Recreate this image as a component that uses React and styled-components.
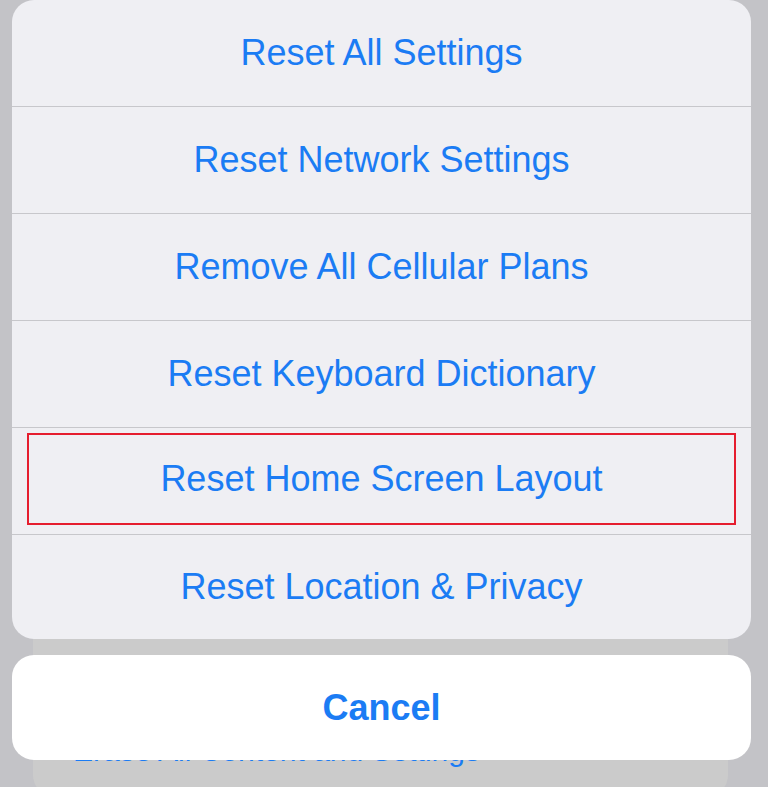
import styled, { createGlobalStyle } from "styled-components";

const GlobalStyle = createGlobalStyle`
  html, body {
    margin: 0;
    padding: 0;
    background: #c3c3c7;
  }
  body {
    font-family: "Liberation Sans", Arial, sans-serif;
  }
`;

const actions = [
  "Reset All Settings",
  "Reset Network Settings",
  "Remove All Cellular Plans",
  "Reset Keyboard Dictionary",
  "Reset Home Screen Layout",
  "Reset Location & Privacy",
];

const HIGHLIGHTED = "Reset Home Screen Layout";

export default function App() {
  return (
    <>
      <GlobalStyle />
      <Screen>
        <PageLayer>
          <PageCard>
            <PageLink>Erase All Content and Settings</PageLink>
          </PageCard>
        </PageLayer>

        <Overlay>
          <Sheet>
            {actions.map((label) => (
              <ActionRow key={label} $highlighted={label === HIGHLIGHTED}>
                <ActionInner $highlighted={label === HIGHLIGHTED}>
                  {label}
                </ActionInner>
              </ActionRow>
            ))}
          </Sheet>
          <CancelButton>Cancel</CancelButton>
        </Overlay>
      </Screen>
    </>
  );
}

const Screen = styled.div`
  display: grid;
  width: 768px;
  height: 787px;
  overflow: hidden;
  background: #c3c3c7;
`;

const PageLayer = styled.div`
  grid-area: 1 / 1;
  display: flex;
  flex-direction: column;
  justify-content: flex-end;
  padding: 0 40px 0 33px;
  margin-bottom: -10px;
`;

const PageCard = styled.div`
  height: 180px;
  background: #cbcbcb;
  border-radius: 22px;
  padding: 116px 0 0 40px;
  box-sizing: border-box;
`;

const PageLink = styled.div`
  color: #1b7cf4;
  font-size: 30px;
  line-height: 36px;
`;

const Overlay = styled.div`
  grid-area: 1 / 1;
  display: flex;
  flex-direction: column;
  gap: 16px;
  padding: 0 17px 0 12px;
  z-index: 1;
`;

const Sheet = styled.div`
  display: flex;
  flex-direction: column;
  height: 639px;
  background: #efeff3;
  border-radius: 22px;
  overflow: hidden;
`;

const ActionRow = styled.div`
  flex: 0 0 auto;
  box-sizing: border-box;
  height: 107px;
  display: flex;
  padding: ${(p) => (p.$highlighted ? "5px 15px 9px" : "0")};

  &:first-child {
    height: 106px;
  }
  & + & {
    border-top: 1px solid #c7c7cb;
  }
  &:last-child {
    flex: 1 1 auto;
    height: auto;
  }
`;

const ActionInner = styled.div`
  flex: 1;
  display: flex;
  align-items: center;
  justify-content: center;
  color: #1b7cf4;
  font-size: 36px;
  border: ${(p) => (p.$highlighted ? "2px solid #e51d2e" : "none")};
`;

const CancelButton = styled.div`
  height: 105px;
  display: flex;
  align-items: center;
  justify-content: center;
  background: #ffffff;
  border-radius: 22px;
  color: #1b7cf4;
  font-size: 36px;
  font-weight: 700;
`;
